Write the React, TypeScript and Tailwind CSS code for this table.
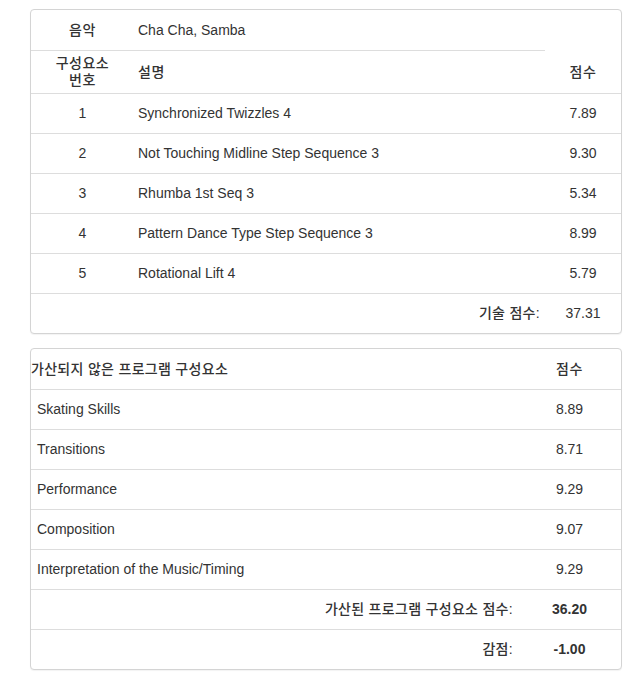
import React from "react";

const font = { fontFamily: '"Liberation Sans", Arial, "Noto Sans CJK KR", sans-serif' };

const elements = [
  ["1", "Synchronized Twizzles 4", "7.89"],
  ["2", "Not Touching Midline Step Sequence 3", "9.30"],
  ["3", "Rhumba 1st Seq 3", "5.34"],
  ["4", "Pattern Dance Type Step Sequence 3", "8.99"],
  ["5", "Rotational Lift 4", "5.79"],
];

const components = [
  ["Skating Skills", "8.89"],
  ["Transitions", "8.71"],
  ["Performance", "9.29"],
  ["Composition", "9.07"],
  ["Interpretation of the Music/Timing", "9.29"],
];

export default function App() {
  return (
    <div className="bg-white text-[14px] text-[#333] pt-[9px] pl-[30px] min-h-[674px]" style={font}>
      {/* Panel 1 */}
      <div className="w-[592px] border border-[#d4d4d4] rounded-[4px] shadow-[0_1px_1px_rgba(0,0,0,0.05)] bg-white">
        <div className="flex h-[41px]">
          <div className="flex w-[514px] border-b border-[#ddd]">
            <div className="w-[103px] flex items-center justify-center font-medium tracking-[0.5px]">음악</div>
            <div className="flex-1 flex items-center pl-[4px]">Cha Cha, Samba</div>
          </div>
          <div className="flex-1"></div>
        </div>
        <div className="flex h-[43px] border-b border-[#ddd] font-medium">
          <div className="w-[103px] flex items-center justify-center text-center leading-[17px] tracking-[0.5px]">
            구성요소
            <br />
            번호
          </div>
          <div className="w-[411px] flex items-center pl-[4px] tracking-[0.5px]">설명</div>
          <div className="flex-1 flex items-center justify-center tracking-[0.5px]">점수</div>
        </div>
        {elements.map(([n, d, s]) => (
          <div key={n} className="flex h-[40px] border-b border-[#ddd]">
            <div className="w-[103px] flex items-center justify-center">{n}</div>
            <div className="w-[411px] flex items-center pl-[4px]">{d}</div>
            <div className="flex-1 flex items-center justify-center">{s}</div>
          </div>
        ))}
        <div className="flex h-[39px]">
          <div className="w-[514px] flex items-center justify-end pr-[5px] font-medium tracking-[0.3px]">기술 점수:</div>
          <div className="flex-1 flex items-center justify-center">37.31</div>
        </div>
      </div>

      {/* Panel 2 */}
      <div className="mt-[14px] w-[592px] border border-[#d4d4d4] rounded-[4px] shadow-[0_1px_1px_rgba(0,0,0,0.05)] bg-white">
        <div className="flex h-[41px] border-b border-[#ddd] font-medium">
          <div className="w-[487px] flex items-center tracking-[0.3px]">가산되지 않은 프로그램 구성요소</div>
          <div className="flex-1 flex items-center justify-center tracking-[0.5px]">점수</div>
        </div>
        {components.map(([n, s]) => (
          <div key={n} className="flex h-[40px] border-b border-[#ddd]">
            <div className="w-[487px] flex items-center pl-[6px]">{n}</div>
            <div className="flex-1 flex items-center justify-center">{s}</div>
          </div>
        ))}
        <div className="flex h-[40px] border-b border-[#ddd]">
          <div className="w-[487px] flex items-center justify-end pr-[5px] font-medium tracking-[0.3px]">가산된 프로그램 구성요소 점수:</div>
          <div className="flex-1 flex items-center justify-center font-bold">36.20</div>
        </div>
        <div className="flex h-[39px]">
          <div className="w-[487px] flex items-center justify-end pr-[5px] font-medium tracking-[0.3px]">감점:</div>
          <div className="flex-1 flex items-center justify-center font-bold">-1.00</div>
        </div>
      </div>
    </div>
  );
}
